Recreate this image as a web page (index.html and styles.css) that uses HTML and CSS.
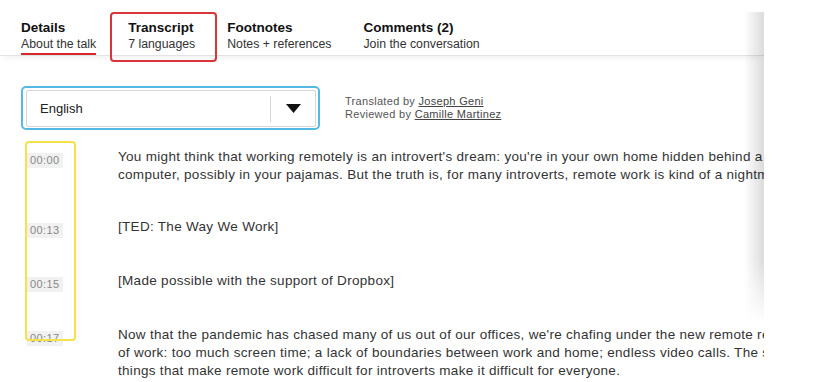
FILE: index.html
```html
<!DOCTYPE html>
<html lang="en">
<head>
    <meta charset="UTF-8">
    <meta name="viewport" content="width=device-width, initial-scale=1.0">
    <title>Transcript</title>
    <link rel="stylesheet" href="styles.css">
</head>
<body>
    <div class="page">
        <!-- Tabs -->
        <nav class="tabs">
            <a class="tab active" href="#">
                <span class="tab-title">Details</span>
                <span class="tab-sub">About the talk</span>
            </a>
            <a class="tab marked" href="#">
                <span class="tab-title">Transcript</span>
                <span class="tab-sub">7 languages</span>
            </a>
            <a class="tab" href="#">
                <span class="tab-title">Footnotes</span>
                <span class="tab-sub">Notes + references</span>
            </a>
            <a class="tab" href="#">
                <span class="tab-title">Comments (2)</span>
                <span class="tab-sub">Join the conversation</span>
            </a>
        </nav>

        <!-- Language -->
        <div class="lang-row">
            <div class="select-wrap">
                <div class="select">
                    <span class="select-value">English</span>
                    <span class="select-arrow">
                        <svg width="15" height="9" viewBox="0 0 15 9"><path d="M0 0 H15 L7.5 9 Z" fill="#111"/></svg>
                    </span>
                </div>
            </div>
            <div class="credits">
                <div>Translated by <a href="#">Joseph Geni</a></div>
                <div>Reviewed by <a href="#">Camille Martinez</a></div>
            </div>
        </div>

        <!-- Transcript -->
        <div class="transcript">
            <div class="time-mark"></div>
            <div class="row">
                <span class="time">00:00</span>
                <p>You might think that working remotely is an introvert's dream: you're in your own home hidden behind a<br>computer, possibly in your pajamas. But the truth is, for many introverts, remote work is kind of a nightmare.</p>
            </div>
            <div class="row">
                <span class="time">00:13</span>
                <p>[TED: The Way We Work]</p>
            </div>
            <div class="row">
                <span class="time">00:15</span>
                <p>[Made possible with the support of Dropbox]</p>
            </div>
            <div class="row">
                <span class="time">00:17</span>
                <p>Now that the pandemic has chased many of us out of our offices, we're chafing under the new remote realities<br>of work: too much screen time; a lack of boundaries between work and home; endless video calls. The same<br>things that make remote work difficult for introverts make it difficult for everyone.</p>
            </div>
        </div>

        <div class="edge-shadow"></div>
    </div>
</body>
</html>
```

FILE: styles.css
```css
body {
    margin: 0;
    background: #fff;
    color: #333;
    font-family: "Liberation Sans", Arial, sans-serif;
}

/* Card that gets clipped on the right */
.page {
    position: relative;
    width: 764px;
    height: 382px;
    overflow: hidden;
    padding-top: 12px;
    box-sizing: border-box;
}

.edge-shadow {
    position: absolute;
    top: 12px;
    right: 0;
    width: 20px;
    height: 310px;
    background: linear-gradient(to right, rgba(0, 0, 0, 0), rgba(0, 0, 0, 0.14));
    -webkit-mask-image: linear-gradient(to bottom, #000 80%, transparent);
    mask-image: linear-gradient(to bottom, #000 80%, transparent);
}

/* Tabs */
.tabs {
    display: flex;
    gap: 32px;
    padding: 0 21px;
    border-bottom: 1px solid #e3e3e3;
    box-shadow: 0 6px 6px -4px rgba(0, 0, 0, 0.06);
}

.tab {
    position: relative;
    display: flex;
    flex-direction: column;
    padding: 7px 0 1px;
    text-decoration: none;
    border-bottom: 2px solid transparent;
}

.tab.active {
    border-bottom-color: #d8262c;
}

.tab-title {
    font-size: 13.5px;
    font-weight: bold;
    color: #111;
    line-height: 17px;
}

.tab-sub {
    font-size: 12.3px;
    color: #333;
    line-height: 16px;
}

.tab.marked::after {
    content: "";
    position: absolute;
    top: 0;
    left: -18px;
    right: -22px;
    bottom: -9px;
    border: 2px solid #d9343a;
    border-radius: 4px;
}

/* Language select */
.lang-row {
    display: flex;
    align-items: center;
    gap: 25px;
    padding: 30px 0 0 21px;
}

.select-wrap {
    width: 299px;
    box-sizing: border-box;
    border: 2px solid #55b9e6;
    border-radius: 5px;
    padding: 2px 2px 1px 3px;
}

.select {
    display: flex;
    align-items: center;
    height: 35px;
    border: 1px solid #d6d6d6;
    border-radius: 2px;
}

.select-value {
    flex: 1;
    padding-left: 13px;
    font-size: 13px;
    color: #222;
}

.select-arrow {
    display: flex;
    align-items: center;
    justify-content: center;
    width: 44px;
    height: 26px;
    border-left: 1px solid #d6d6d6;
}

.credits {
    font-size: 11px;
    letter-spacing: 0.3px;
    line-height: 13px;
    color: #555;
}

.credits a {
    color: #444;
}

/* Transcript */
.transcript {
    position: relative;
    display: flex;
    flex-direction: column;
    gap: 34px;
    padding: 18px 0 0 25px;
}

.time-mark {
    position: absolute;
    left: 25px;
    top: 11px;
    width: 51px;
    height: 200px;
    box-sizing: border-box;
    border: 2px solid #f5e14a;
    border-radius: 4px;
    z-index: 1;
}

.row {
    display: grid;
    grid-template-columns: 93px 1fr;
    align-items: start;
}

.time {
    justify-self: start;
    margin: 5px 0 0 2px;
    padding: 1px 3px;
    background: #f1f1f1;
    font-size: 11px;
    letter-spacing: 0.4px;
    line-height: 13px;
    color: #888;
}

.row p {
    margin: 0;
    font-size: 13.5px;
    letter-spacing: 0.3px;
    line-height: 18px;
    color: #333;
    white-space: nowrap;
}
```
